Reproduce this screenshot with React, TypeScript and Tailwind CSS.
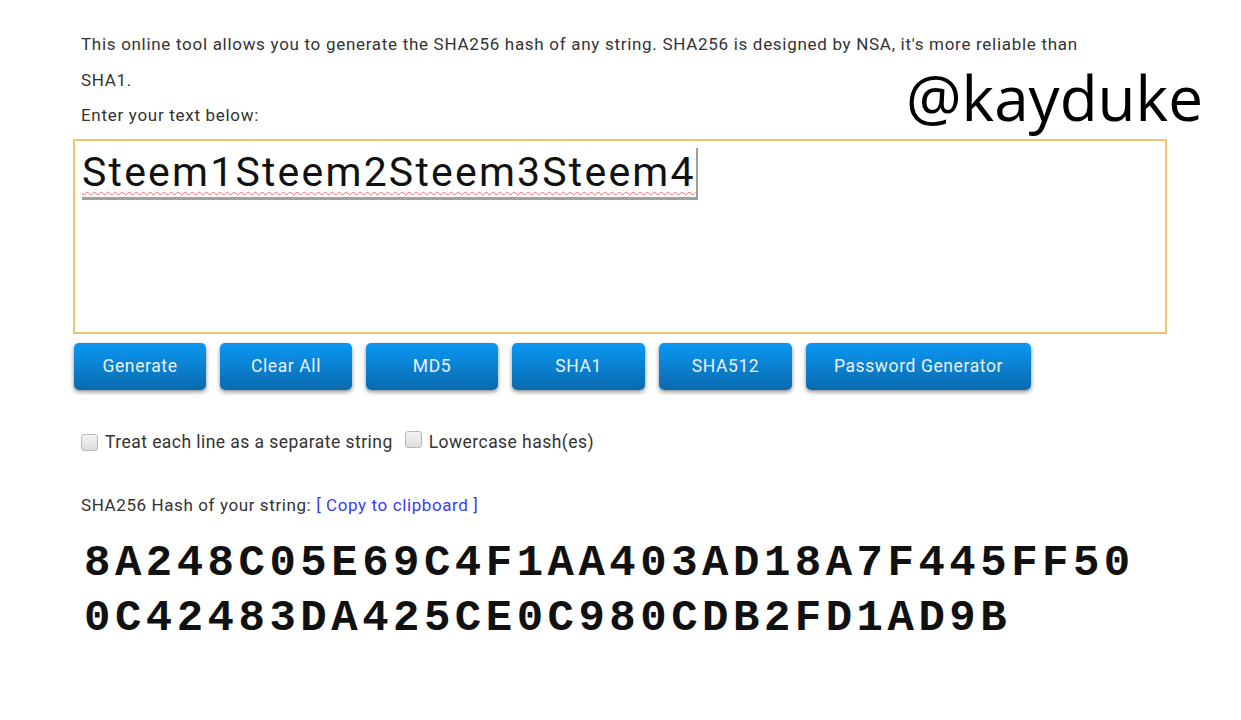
import React from "react";

const buttons: { label: string; w: string }[] = [
  { label: "Generate", w: "w-[132px]" },
  { label: "Clear All", w: "w-[132px]" },
  { label: "MD5", w: "w-[132px]" },
  { label: "SHA1", w: "w-[133px]" },
  { label: "SHA512", w: "w-[133px]" },
  { label: "Password Generator", w: "w-[225px]" },
];

function Checkbox() {
  return (
    <span className="inline-block w-[17px] h-[17px] rounded-[3px] border border-[#b8b8b8] bg-gradient-to-b from-[#f4f4f4] to-[#dcdcdc] shrink-0" />
  );
}

export default function App() {
  return (
    <div
      className="w-[1241px] h-[720px] bg-white overflow-hidden relative text-[#333]"
      style={{ fontFamily: "Roboto, 'Liberation Sans', sans-serif" }}
    >
      <div className="pl-[81px] pt-[26px]">
        <p className="text-[17px] tracking-[0.7px] leading-[36px] w-[1030px]">
          This online tool allows you to generate the SHA256 hash of any string. SHA256 is designed by NSA, it's more reliable than SHA1.
        </p>
        <p className="text-[17px] tracking-[0.7px] leading-[36px] -mt-[1px]">Enter your text below:</p>
      </div>

      <div
        className="absolute left-[906px] top-[62px] text-[62px] leading-[70px] text-black"
        style={{ fontFamily: "'Open Sans', 'Noto Sans', sans-serif" }}
      >
        @kayduke
      </div>

      <div className="ml-[73px] mt-[6px] w-[1094px] h-[195px] border-2 border-[#f2c46a] bg-white px-[7px] pt-[7px]">
        <span className="inline-block text-[41px] tracking-[2.2px] leading-[48px] text-[#111] border-b-[3px] border-r-[2px] border-[#a0a0a0] pb-[1px]">
          <span className="underline decoration-wavy decoration-[#ff6a6a] decoration-[1px] underline-offset-[5px]">
            Steem1Steem2Steem3Steem4
          </span>
        </span>
      </div>

      <div className="flex gap-[14px] ml-[74px] mt-[9px]">
        {buttons.map((b) => (
          <div
            key={b.label}
            className={`${b.w} h-[47px] rounded-[5px] bg-gradient-to-b from-[#0a98f4] to-[#0a6aae] shadow-[0_2px_4px_rgba(0,0,0,0.45)] flex items-center justify-center text-[#e8f2fa] text-[17.5px] tracking-[0.6px]`}
          >
            {b.label}
          </div>
        ))}
      </div>

      <div className="flex items-center ml-[81px] mt-[40px] text-[17.5px] tracking-[0.45px] text-[#333] h-[24px]">
        <Checkbox />
        <span className="ml-[7px]">Treat each line as a separate string</span>
        <span className="ml-[12px]">
          <Checkbox />
        </span>
        <span className="ml-[7px]">Lowercase hash(es)</span>
      </div>

      <div className="ml-[81px] mt-[39px] text-[17px] tracking-[0.6px] leading-[24px] text-[#333]">
        SHA256 Hash of your string: <span className="text-[#3a3af5]">[ Copy to clipboard ]</span>
      </div>

      <div
        className="ml-[84px] mt-[19px] text-[44px] tracking-[4.5px] leading-[55px] font-bold text-[#111] w-[1120px]"
        style={{ fontFamily: "'Liberation Mono', 'Courier New', monospace" }}
      >
        8A248C05E69C4F1AA403AD18A7F445FF50
        <br />
        0C42483DA425CE0C980CDB2FD1AD9B
      </div>
    </div>
  );
}
